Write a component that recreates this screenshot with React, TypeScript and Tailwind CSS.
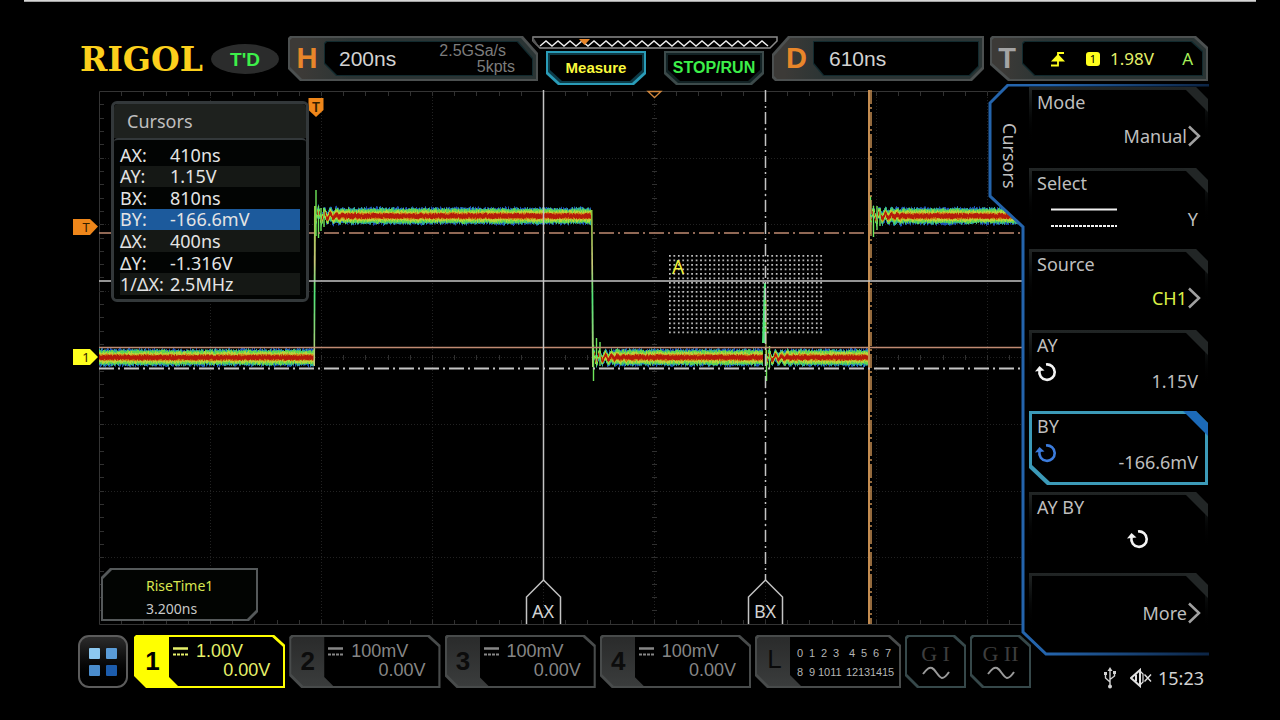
import React from "react";
import clsx from "clsx";

// bevelled outlines, named after the corners that are cut
const CUT_TR_BL =
  "[clip-path:polygon(2px_0,calc(100%_-_15px)_0,100%_17px,100%_100%,12px_100%,0_calc(100%_-_12px),0_2px)]";
const CUT_TL_BR =
  "[clip-path:polygon(16px_0,100%_0,100%_calc(100%_-_12px),calc(100%_-_12px)_100%,3px_100%,0_calc(100%_-_3px),0_18px)]";
const CUT_SMALL_TR_BL =
  "[clip-path:polygon(2px_0,calc(100%_-_12px)_0,100%_11px,100%_100%,18px_100%,0_calc(100%_-_16px),0_2px)]";
const CUT_BL = "[clip-path:polygon(0_0,100%_0,100%_100%,11px_100%,0_calc(100%_-_11px))]";
const CUT_BL_BR =
  "[clip-path:polygon(0_0,100%_0,100%_calc(100%_-_11px),calc(100%_-_12px)_100%,12px_100%,0_calc(100%_-_11px))]";
const CUT_TL_BR_SMALL =
  "[clip-path:polygon(9px_0,100%_0,100%_calc(100%_-_9px),calc(100%_-_9px)_100%,0_100%,0_9px)]";
const CUT_CHANNEL =
  "[clip-path:polygon(2px_0,calc(100%_-_11px)_0,100%_10px,100%_100%,12px_100%,0_calc(100%_-_12px),0_2px)]";
const CUT_MENU =
  "[clip-path:polygon(0_0,calc(100%_-_12px)_0,100%_12px,100%_100%,18px_100%,0_calc(100%_-_17px))]";

const SANS = "font-['Liberation_Sans',Arial,sans-serif]";
const NOTO = "font-['Noto_Sans',sans-serif]";

interface HeaderBoxProps {
  letter: string;
  letterClass: string;
  cut: string;
  innerCut: string;
  className?: string;
  children: React.ReactNode;
}

function HeaderBox({ letter, letterClass, cut, innerCut, className, children }: HeaderBoxProps) {
  return (
    <div className={clsx("h-[45px] bg-[#4c5050] p-[2px]", cut, className)}>
      <div className={clsx("flex h-full bg-linear-to-r from-[#3c3a37] from-5% to-[#2a3434] to-25% pr-[3px]", cut)}>
        <span className={clsx("shrink-0 text-center text-[29px] leading-[41px] font-bold", letterClass)}>{letter}</span>
        <div className={clsx("my-[3px] min-w-0 flex-1 bg-[#122a2e] p-px", innerCut)}>
          <div className={clsx("flex h-full items-center bg-black", innerCut)}>{children}</div>
        </div>
      </div>
    </div>
  );
}

function MemoryBar() {
  const teeth = Array.from({ length: 39 }, (_, i) => `${8 + i * 6},${i % 2 ? 5 : 10}`).join(" ");
  return (
    <svg viewBox="0 0 246 13" className="block h-[13px] w-full">
      <path d="M1 1H245V5L238 12H8L1 5Z" fill="#000" stroke="#8a8a8a" strokeWidth="1.5" />
      <path d="M1 1L8 12L1 6Z" fill="#555" />
      <polyline points={teeth} fill="none" stroke="#eee" strokeWidth="1.4" />
      <path d="M47 3H58L52.500 9Z" fill="#e8862a" />
    </svg>
  );
}

function TopBar() {
  return (
    <header className={clsx("mt-[34px] flex h-12 items-start pr-[72px] pl-20", SANS)}>
      <h1 className="w-[131px] shrink-0 font-['DejaVu_Serif',serif] text-[33px] leading-[48px] font-bold text-[#fcd01c]">
        RIGOL
      </h1>
      <div className="mt-2 mr-[9px] h-[30px] w-[68px] shrink-0 rounded-[50%] bg-[#2b2c2c] text-center text-[19px] leading-[31px] font-bold text-[#3df04a]">
        T'D
      </div>
      <HeaderBox
        letter="H"
        letterClass="w-[34px] text-[#e8862a]"
        cut={CUT_TR_BL}
        innerCut={CUT_TR_BL}
        className="min-w-[250px] flex-1"
      >
        <span className="pl-[14px] text-[21px] text-[#d2d2d2]">200ns</span>
        <div className="ml-auto pr-[17px] text-[16px] leading-4 text-[#7c7c7c]">
          <div className="pr-[9px]">2.5GSa/s</div>
          <div className="text-right">5kpts</div>
        </div>
      </HeaderBox>
      <div className="-mx-[6px] w-[246px] shrink-0">
        <MemoryBar />
        <div className="mt-[2px] flex justify-center gap-[18px]">
          <button className={clsx("h-[34px] w-[100px] bg-[#2a9cb8] p-[2px]", CUT_BL_BR)}>
            <span className={clsx("block h-full bg-[#0d3a46] p-[2px]", CUT_BL_BR)}>
              <span className={clsx("block h-full bg-black text-[15px] leading-[26px] font-bold text-[#fafa3c]", CUT_BL_BR)}>
                Measure
              </span>
            </span>
          </button>
          <button className={clsx("h-[34px] w-[100px] bg-[#3c4a4a] p-[2px]", CUT_BL_BR)}>
            <span className={clsx("block h-full bg-[#122224] p-[2px]", CUT_BL_BR)}>
              <span className={clsx("block h-full bg-black text-[16px] leading-[25px] font-bold text-[#3df04a]", CUT_BL_BR)}>
                STOP/RUN
              </span>
            </span>
          </button>
        </div>
      </div>
      <HeaderBox
        letter="D"
        letterClass="w-[39px] pl-[6px] text-[#e8862a]"
        cut={CUT_TL_BR}
        innerCut="[clip-path:polygon(0_0,100%_0,100%_calc(100%_-_9px),calc(100%_-_9px)_100%,10px_100%,0_calc(100%_-_12px))]"
        className="w-[212px] shrink-0"
      >
        <span className="pl-[15px] text-[21px] text-[#d2d2d2]">610ns</span>
      </HeaderBox>
      <HeaderBox
        letter="T"
        letterClass="w-[30px] text-[#a4a4a4]"
        cut={CUT_SMALL_TR_BL}
        innerCut={CUT_CHANNEL}
        className="ml-[6px] w-[218px] shrink-0"
      >
        <div className={clsx("flex flex-1 items-center pr-2 pl-[27px] text-[#e6f06a]", NOTO)}>
          <svg viewBox="0 0 16 16" className="h-4 w-4">
            <path d="M1 14.500H8V2H14" fill="none" stroke="#ffff1e" strokeWidth="1.800" />
            <path d="M8 3L15 10.500H1Z" fill="#ffff1e" />
          </svg>
          <span className="mr-[10px] ml-5 h-[14px] w-[14px] rounded-[3px] bg-[#ffff1e] text-center text-[11px] leading-[14px] text-black">
            1
          </span>
          <span className="text-[17px]">1.98V</span>
          <span className="ml-auto pr-px text-[17px] text-[#a8f05a]">A</span>
        </div>
      </HeaderBox>
    </header>
  );
}

const X0 = 99;
const X1 = 1024;
const Y0 = 91;
const Y1 = 624;
const DIV_X = 111;
const DIV_Y = 66.6;

function makeNoise(seed: number) {
  let s = seed;
  return () => {
    s = (s * 16807) % 2147483647;
    return s / 2147483647;
  };
}

interface Segment {
  from: number;
  to: number;
  level: number;
  ring: number;
}

const SEGMENTS: Segment[] = [
  { from: 99, to: 314, level: 357.5, ring: 0 },
  { from: 315, to: 591, level: 216, ring: 7 },
  { from: 593, to: 763, level: 357.5, ring: -6 },
  { from: 766, to: 869, level: 357.5, ring: 5 },
  { from: 870, to: 1018, level: 216, ring: 7 },
];

const LAYERS = [
  { color: "#1c50b4", half: 6.5, jitter: 3 },
  { color: "#2fae9a", half: 6, jitter: 2.6 },
  { color: "#62d64e", half: 5.6, jitter: 2 },
  { color: "#b8d43c", half: 3.8, jitter: 2.2 },
  { color: "#cc7a14", half: 2.6, jitter: 1 },
  { color: "#b41c0a", half: 1.6, jitter: 1.3 },
];

// distance of the ringing trace from its settled level, x pixels after the edge
const ringing = (ring: number, x: number) => ring * Math.exp(-x / 13) * Math.cos(x * 1.05);

const tracePath = (half: number, jitter: number, seed: number) => {
  const rnd = makeNoise(seed);
  let d = "";
  for (const { from, to, level, ring } of SEGMENTS) {
    for (let x = from; x < to; x++) {
      const c = level + ringing(ring, x - from) + (rnd() - 0.5) * 1.2;
      const tight = ring ? Math.min(1, 0.55 + (x - from) / 50) : 1;
      const up = (half + rnd() * jitter) * tight;
      const down = (half + rnd() * jitter) * tight;
      d += `M${x}.5 ${(c - up).toFixed(1)}V${(c + down).toFixed(1)}`;
    }
  }
  return d;
};

function Grid() {
  const cols = Array.from({ length: 8 }, (_, i) => X0 + (i + 1) * DIV_X + 0.5);
  const rows = Array.from({ length: 7 }, (_, i) => Math.round(Y0 + (i + 1) * DIV_Y) + 0.5);
  const xTicks = Array.from({ length: 41 }, (_, i) => Math.round(X0 + (i + 1) * (DIV_X / 5)) + 0.5);
  const yTicks = Array.from({ length: 39 }, (_, i) => Math.round(Y0 + (i + 1) * (DIV_Y / 5)) + 0.5);
  return (
    <g fill="none">
      <path d={`M${X1} 91.500H99.500V624.500H${X1}`} stroke="#343434" />
      <path
        d={cols.map((x) => `M${x} ${Y0}V${Y1}`).join("") + rows.map((y) => `M${X0} ${y}H${X1}`).join("")}
        stroke="#222"
        strokeDasharray="1 2"
      />
      <path
        d={
          xTicks.map((x) => `M${x} 92v4M${x} 624v-4M${x} 355v5`).join("") +
          yTicks.map((y) => `M100 ${y}h4M652 ${y}h5`).join("")
        }
        stroke="#303030"
      />
    </g>
  );
}

function Plot() {
  return (
    <svg
      viewBox="72 84 952 544"
      className="block h-auto w-full"
      fontFamily="'Noto Sans', sans-serif"
      role="img"
      aria-label="Channel 1 waveform"
    >
      <defs>
        <pattern id="zone" x="669" y="255" width="4.45" height="4.5" patternUnits="userSpaceOnUse">
          <rect width="1.7" height="1.7" fill="#c8c8c8" />
        </pattern>
        <linearGradient id="edge" x1="0" y1="0" x2="0" y2="1">
          <stop offset="0" stopColor="#8cc83c" />
          <stop offset="0.35" stopColor="#c8c878" />
          <stop offset="0.55" stopColor="#50e678" />
          <stop offset="1" stopColor="#c8c878" />
        </linearGradient>
      </defs>
      <Grid />

      <rect x="669" y="255" width="154" height="79" fill="url(#zone)" />

      {LAYERS.map((l, i) => (
        <path key={l.color} d={tracePath(l.half, l.jitter, 91 + i * 37)} stroke={l.color} />
      ))}
      <path d="M313.500 366L314 206H316L315 366Z" fill="url(#edge)" />
      <path d="M591 210L592 367H594L592.500 210Z" fill="url(#edge)" />
      <path d="M868 366V206H870V366Z" fill="url(#edge)" />
      <g stroke="#6ee65a" strokeWidth="1.400">
        <path d="M316 190V236M318.500 206V238M321 208V231M324 208V227" />
        <path d="M593.500 345V381M596.500 338V364M600 342V366" />
        <path d="M766.500 350V381M769.500 346V368" />
        <path d="M870.500 196V234M873.500 206V237M877 206V230M880 208V226" />
      </g>
      <path d="M762 343L764 283H766V343Z" fill="#50e678" />
      <path d="M766 360V300" stroke="#c8d25a" />

      <g stroke="#c08a72" strokeWidth="1.500">
        <path d="M99 347.500H1024" />
        <path d="M99 233H1024" strokeDasharray="15 4 2 4" />
      </g>
      <g stroke="#c48c50">
        <path d="M869 90V624" strokeWidth="2" />
        <path d="M871 90V624" strokeWidth="1.500" strokeDasharray="14 3 2 3" />
      </g>
      <g fill="none" stroke="#c4c4c4" strokeWidth="1.500">
        <path d="M99 281H1024M543.500 90V580" />
        <path d="M99 368.500H1024" strokeWidth="2" strokeDasharray="15 4 2 4" />
        <path d="M765.500 90V580" strokeDasharray="12 4 2 4" />
        <path d="M526.500 624V597L543.500 580L560.500 597V624M748.500 624V597L765.500 580L782.500 597V624" />
      </g>
      <g fill="#d2d2d2" fontSize="18" textAnchor="middle">
        <text x="543" y="618">AX</text>
        <text x="765" y="618">BX</text>
      </g>
      <text x="672" y="274" fontSize="19" fill="#f0f03c">
        A
      </text>

      <path d="M648 91.500H661L654.500 97.500Z" fill="#000" stroke="#d0863c" strokeWidth="1.300" />
      <path d="M308.500 98H323.500V110L316 117L308.500 110Z" fill="#ee861a" />
      <path d="M73 219H90L98 226.500L90 235H73Z" fill="#ee861a" />
      <path d="M73 349H90L98 357L90 365H73Z" fill="#ffff1e" />
      <g fill="#332000" textAnchor="middle">
        <text x="316" y="112" fontSize="14" fontWeight="600">
          T
        </text>
        <text x="86" y="232" fontSize="13">
          T
        </text>
        <text x="86" y="362" fontSize="13">
          1
        </text>
      </g>
    </svg>
  );
}

const READOUTS = [
  { name: "AX:", value: "410ns", row: "" },
  { name: "AY:", value: "1.15V", row: "bg-[#151815]" },
  { name: "BX:", value: "810ns", row: "" },
  { name: "BY:", value: "-166.6mV", row: "bg-[#1c5a9c]" },
  { name: "ΔX:", value: "400ns", row: "bg-[#151815]" },
  { name: "ΔY:", value: "-1.316V", row: "" },
  { name: "1/ΔX:", value: "2.5MHz", row: "bg-[#151815]" },
];

function CursorPanel() {
  return (
    <section className="absolute top-[17px] left-[39px] w-[198px] rounded-[6px] border-[3px] border-[#33383a] bg-black">
      <h2 className="rounded-t-[4px] bg-[#1e211e] pl-[13px] text-[18px] leading-[34px] text-[#bebebe]">Cursors</h2>
      <div className="rounded-[4px] border-t-2 border-[#33383a] bg-[#020403] px-[6px] py-1">
        <table className="h-[151px] w-full text-[18px] leading-[18px] text-[#e4e4e4]">
          <tbody>
            {READOUTS.map((r) => (
              <tr key={r.name} className={r.row}>
                <th className="w-[50px] text-left font-normal whitespace-nowrap">{r.name}</th>
                <td>{r.value}</td>
              </tr>
            ))}
          </tbody>
        </table>
      </div>
    </section>
  );
}

function MeasureResult() {
  return (
    <div className={clsx("absolute bottom-[7px] left-[29px] h-[53px] w-[157px] bg-[#55595a] p-[2px]", CUT_TL_BR_SMALL)}>
      <div className={clsx("h-full bg-[#020402] pt-1 pl-[43px] text-[14px] leading-[23px]", CUT_TL_BR_SMALL)}>
        <div className="text-[#d8e650]">RiseTime1</div>
        <div className="text-[#c8c8c8]">3.200ns</div>
      </div>
    </div>
  );
}

interface ChannelProps {
  id: number;
  scale: string;
  offset: string;
  on?: boolean;
}

function Channel({ id, scale, offset, on }: ChannelProps) {
  return (
    <button
      className={clsx("h-[53px] min-w-[151px] flex-1 p-[2px] text-left", on ? "bg-[#ffff00]" : "bg-[#484b4b]", CUT_CHANNEL)}
    >
      <span className={clsx("flex h-full", on ? "bg-[#ffff00]" : "bg-linear-to-b from-[#2a2b2b] to-[#3a3c3c]", CUT_CHANNEL)}>
        <span
          className={clsx(
            "w-[33px] shrink-0 text-center text-[26px] leading-[49px] font-bold",
            on ? "text-black" : "text-[#0c0c0c]"
          )}
        >
          {id}
        </span>
        <span
          className={clsx(
            "flex-1 bg-black pt-[5px] text-[18px] leading-[19px] [clip-path:polygon(0_0,calc(100%_-_10px)_0,100%_9px,100%_100%,9px_100%,0_calc(100%_-_9px))]",
            on ? "text-[#e6f06a]" : "text-[#868686]"
          )}
        >
          <span className="flex items-center pl-1">
            <svg viewBox="0 0 15 9" className="mr-2 h-[9px] w-[15px]" stroke="currentColor">
              <path d="M0 1.500H15" strokeWidth="2.500" />
              <path d="M0 7.500H15" strokeWidth="2" strokeDasharray="3 1" />
            </svg>
            {scale}
          </span>
          <span className="block pr-[13px] text-right">{offset}</span>
        </span>
      </span>
    </button>
  );
}

const LOGIC = [
  ["0", "1", "2", "3"],
  ["4", "5", "6", "7"],
  ["8", "9", "10", "11"],
  ["12", "13", "14", "15"],
];

function LogicBox() {
  return (
    <button className={clsx("h-[53px] w-[146px] shrink-0 bg-[#484b4b] p-[2px]", CUT_CHANNEL)}>
      <span className={clsx("flex h-full bg-linear-to-b from-[#2a2b2b] to-[#3a3c3c]", CUT_CHANNEL)}>
        <span className="w-[33px] shrink-0 pl-[2px] text-center text-[26px] leading-[45px] text-[#0a0a0a]">L</span>
        <span
          className={clsx(
            "grid flex-1 grid-cols-2 content-center gap-x-[4px] bg-black pt-[2px] pr-[5px] pl-1 text-[11px] leading-[19px] text-[#b4b4b4]",
            CUT_BL
          )}
        >
          {LOGIC.map((group) => (
            <span key={group[0]} className="grid grid-cols-4">
              {group.map((n) => (
                <span key={n} className="flex justify-center">
                  {n}
                </span>
              ))}
            </span>
          ))}
        </span>
      </span>
    </button>
  );
}

function Generator({ name }: { name: string }) {
  return (
    <button className={clsx("h-[53px] w-[61px] shrink-0 bg-[#36484a] p-[2px]", CUT_CHANNEL)}>
      <span className={clsx("flex h-full flex-col items-center bg-black pt-[5px]", CUT_CHANNEL)}>
        <span className="font-['Liberation_Serif',serif] text-[22px] leading-6 text-[#3e3e3e]">{name}</span>
        <svg viewBox="0 0 28 14" className="h-[14px] w-[28px]" fill="none" stroke="#9a9a9a" strokeWidth="2">
          <path d="M1 8C5 3 7 1 10 2C14 4 16 11 20 12C23 12 25 9 27 6" />
        </svg>
      </span>
    </button>
  );
}

function ChannelBar() {
  return (
    <nav className={clsx("mt-[7px] -mr-[7px] ml-[6px] flex gap-1", SANS)}>
      <button
        aria-label="Home"
        className="mr-[2px] grid h-[53px] w-[50px] shrink-0 grid-cols-[11px_11px] content-center justify-center gap-[6px] rounded-[11px] border-2 border-[#5c5c5c] bg-linear-to-b from-[#2c2c2c] to-black"
      >
        <span className="h-[11px] rounded-[1px] bg-[#8cc8f0]" />
        <span className="h-[11px] rounded-[1px] bg-[#5a9cd8]" />
        <span className="h-[11px] rounded-[1px] bg-[#4a8ccc]" />
        <span className="h-[11px] rounded-[1px] bg-[#1c5cac]" />
      </button>
      <Channel id={1} scale="1.00V" offset="0.00V" on />
      <Channel id={2} scale="100mV" offset="0.00V" />
      <Channel id={3} scale="100mV" offset="0.00V" />
      <Channel id={4} scale="100mV" offset="0.00V" />
      <LogicBox />
      <Generator name="G I" />
      <Generator name="G II" />
    </nav>
  );
}

function Chevron() {
  return (
    <svg viewBox="0 0 14 22" className="h-[22px] w-[14px]" fill="none" stroke="#a0a0a0" strokeWidth="2.500">
      <path d="M2 1.500L12 11L2 20.500" />
    </svg>
  );
}

function Knob({ color }: { color: string }) {
  return (
    <svg viewBox="0 0 22 20" className="h-5 w-[22px]">
      <path d="M11 2.500A7.700 7.700 0 1 1 4.500 8.500" fill="none" stroke={color} strokeWidth="2.600" />
      <path d="M0 9.500L4.500 4L9.500 8.500Z" fill={color} />
    </svg>
  );
}

interface MenuKeyProps {
  title?: string;
  value?: string;
  valueClass?: string;
  active?: boolean;
  chevron?: boolean;
  children?: React.ReactNode;
}

function MenuKey({ title, value, valueClass, active, chevron, children }: MenuKeyProps) {
  return (
    <button
      className={clsx(
        "relative h-[74px] w-full p-[3px] text-left text-[18px] leading-6",
        active ? "bg-[#3c9ab8]" : "bg-linear-to-b from-[#222626] to-black to-80%",
        CUT_MENU
      )}
    >
      <span className={clsx("block h-full bg-black", CUT_MENU)}>
        <span className="block pl-[5px] text-[#bebebe]">{title}</span>
        {children}
        <span
          className={clsx(
            "absolute flex items-center",
            chevron ? "right-[7px]" : "right-[10px]",
            chevron ? (title ? "bottom-[13px]" : "bottom-[22px]") : "bottom-[11px]",
            valueClass ?? "text-[#bebebe]"
          )}
        >
          {value}
          {chevron && <Chevron />}
        </span>
      </span>
      <span
        className={clsx(
          "absolute top-0 right-0 h-[25px] w-[25px] [clip-path:polygon(0_0,13px_0,100%_12px,100%_100%)]",
          active ? "bg-[#1c6ab8]" : "bg-[#222626]"
        )}
      />
    </button>
  );
}

function SideMenu() {
  return (
    <aside className="relative h-[571px] pt-[3px] pl-[5px]">
      <svg viewBox="0 0 222 572" className="absolute top-0 -left-9 h-[572px] w-[222px]">
        <defs>
          <linearGradient id="fade" gradientUnits="userSpaceOnUse" x1="60" y1="0" x2="222" y2="0">
            <stop offset="0" stopColor="#2464ac" />
            <stop offset="1" stopColor="#0c2444" />
          </linearGradient>
        </defs>
        <path
          d="M221 1H20L2 19V112L35 143V548L58 570H221"
          fill="#000"
          stroke="url(#fade)"
          strokeWidth="3"
        />
      </svg>
      <span className="absolute top-[39px] -left-[27px] text-[18px] leading-[26px] text-[#bebebe] [writing-mode:vertical-rl]">
        Cursors
      </span>
      <div className="relative flex flex-col gap-[7px]">
        <MenuKey title="Mode" value="Manual" chevron />
        <MenuKey title="Select">
          <svg viewBox="0 0 66 20" className="absolute top-[40px] left-[22px] h-5 w-[66px]" stroke="#f0f0f0">
            <path d="M0 1.500H66" strokeWidth="2" />
            <path d="M0 18H66" strokeWidth="2" strokeDasharray="3 1" />
          </svg>
          <span className="absolute right-[10px] bottom-[11px] text-[#bebebe]">Y</span>
        </MenuKey>
        <MenuKey title="Source" value="CH1" valueClass="text-[#dcf046]" chevron />
        <MenuKey title="AY" value="1.15V">
          <span className="absolute top-[32px] left-[6px]">
            <Knob color="#f4f4f4" />
          </span>
        </MenuKey>
        <MenuKey title="BY" value="-166.6mV" active>
          <span className="absolute top-[32px] left-[6px]">
            <Knob color="#3c7cdc" />
          </span>
        </MenuKey>
        <MenuKey title="AY BY">
          <span className="absolute top-[37px] left-[98px]">
            <Knob color="#f4f4f4" />
          </span>
        </MenuKey>
        <MenuKey value="More" chevron />
      </div>
    </aside>
  );
}

function StatusBar() {
  return (
    <footer className="mt-[10px] flex items-center justify-end pr-1 text-[18px] leading-[26px] text-[#d2d2d2]">
      <svg viewBox="0 0 12 22" className="mr-[14px] h-[22px] w-3" fill="none" stroke="#d2d2d2" strokeWidth="1.400">
        <path d="M6 3V19M6 15L1.500 11V6M6 12.500L10.500 9V5" />
        <path d="M6 0L8.500 4H3.500Z" fill="#d2d2d2" stroke="none" />
        <circle cx="6" cy="19.500" r="2" fill="#d2d2d2" stroke="none" />
        <path d="M0 5H3V8H0ZM9 4H12V7H9Z" fill="#d2d2d2" stroke="none" />
      </svg>
      <svg viewBox="0 0 22 20" className="mr-[6px] h-5 w-[22px]" fill="none" stroke="#e0e0e0" strokeWidth="2">
        <path d="M1 10L10 2V18Z" />
        <path d="M6 6.500V13.500" />
        <path d="M10 3L13 6V14L10 17" strokeWidth="1.200" />
        <path d="M14.500 6.500L21 13.500M21 6.500L14.500 13.500" strokeWidth="1.400" />
      </svg>
      <time>15:23</time>
    </footer>
  );
}

export default function App() {
  return (
    <div className={clsx("min-h-screen bg-black", NOTO)}>
      <div className="mx-6 h-[2px] bg-linear-to-b from-[#f0f0f0] to-[#8a8a8a]" />
      <TopBar />
      <main className="flex items-start px-[72px]">
        <div className="min-w-0 flex-1">
          <div className="relative">
            <Plot />
            <CursorPanel />
            <MeasureResult />
          </div>
          <ChannelBar />
        </div>
        <div className="relative w-[184px] shrink-0">
          <SideMenu />
          <StatusBar />
        </div>
      </main>
    </div>
  );
}
